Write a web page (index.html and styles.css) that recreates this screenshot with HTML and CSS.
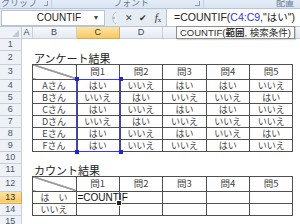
FILE: index.html
```html
<!DOCTYPE html>
<html lang="ja">
<head>
<meta charset="UTF-8">
<meta name="viewport" content="width=device-width, initial-scale=1.0">
<title>COUNTIF</title>
<link rel="stylesheet" href="styles.css">
</head>
<body>
<div class="ribbon">
  <div class="group g1"><span class="label">クリップボード</span><span class="launcher"></span></div>
  <div class="group g2"><span class="label">フォント</span><span class="launcher"></span></div>
  <div class="group g3"><span class="label">配置</span></div>
</div>

<div class="formula-bar">
  <div class="name-box"><span class="name">COUNTIF</span><span class="drop">▾</span></div>
  <div class="grip">
    <svg width="10" height="14" viewBox="0 0 10 14"><path d="M9 1 A7 7 0 0 0 9 13" fill="#eef2f7" stroke="#b7c3d2"/><circle cx="7" cy="7" r="1" fill="#9aa7b8"/></svg>
  </div>
  <div class="fx-buttons">
    <span class="btn cancel">✕</span>
    <span class="btn enter">✔</span>
    <span class="btn fx"><i>f</i><sub>x</sub></span>
  </div>
  <div class="formula">=COUNTIF(<span class="ref">C4:C9</span>,"はい")</div>
</div>

<div class="sheet-wrap">
<table class="sheet">
  <colgroup>
    <col class="c-head"><col class="c-a"><col class="c-b"><col class="c-n"><col class="c-n"><col class="c-n"><col class="c-n"><col class="c-n"><col class="c-rest">
  </colgroup>
  <tr class="r-col">
    <th class="corner"><span class="tri"></span></th><th>A</th><th>B</th><th class="sel">C</th><th>D</th><th>E</th><th>F</th><th>G</th><th></th>
  </tr>
  <tr class="h12"><th>1</th><td></td><td></td><td></td><td></td><td></td><td></td><td></td><td></td></tr>
  <tr class="h14"><th>2</th><td></td><td colspan="3" class="title">アンケート結果</td><td></td><td></td><td></td><td></td></tr>
  <tr class="h15"><th>3</th><td></td><td class="t diag"></td><td class="t q">問1</td><td class="t q">問2</td><td class="t q">問3</td><td class="t q">問4</td><td class="t q">問5</td><td></td></tr>
  <tr class="h12"><th>4</th><td></td><td class="t">Aさん</td><td class="t">はい</td><td class="t">いいえ</td><td class="t">はい</td><td class="t">はい</td><td class="t">いいえ</td><td></td></tr>
  <tr class="h12"><th>5</th><td></td><td class="t">Bさん</td><td class="t">いいえ</td><td class="t">はい</td><td class="t">いいえ</td><td class="t">いいえ</td><td class="t">はい</td><td></td></tr>
  <tr class="h12"><th>6</th><td></td><td class="t">Cさん</td><td class="t">はい</td><td class="t">いいえ</td><td class="t">はい</td><td class="t">はい</td><td class="t">いいえ</td><td></td></tr>
  <tr class="h12"><th>7</th><td></td><td class="t">Dさん</td><td class="t">いいえ</td><td class="t">はい</td><td class="t">いいえ</td><td class="t">いいえ</td><td class="t">いいえ</td><td></td></tr>
  <tr class="h12"><th>8</th><td></td><td class="t">Eさん</td><td class="t">はい</td><td class="t">いいえ</td><td class="t">はい</td><td class="t">いいえ</td><td class="t">はい</td><td></td></tr>
  <tr class="h12"><th>9</th><td></td><td class="t">Fさん</td><td class="t">はい</td><td class="t">いいえ</td><td class="t">いいえ</td><td class="t">はい</td><td class="t">いいえ</td><td></td></tr>
  <tr class="h12"><th>10</th><td></td><td></td><td></td><td></td><td></td><td></td><td></td><td></td></tr>
  <tr class="h13"><th>11</th><td></td><td colspan="3" class="title">カウント結果</td><td></td><td></td><td></td><td></td></tr>
  <tr class="h15"><th>12</th><td></td><td class="t diag"></td><td class="t q">問1</td><td class="t q">問2</td><td class="t q">問3</td><td class="t q">問4</td><td class="t q">問5</td><td></td></tr>
  <tr class="h12"><th class="sel">13</th><td></td><td class="t">は　い</td><td class="t active"><span class="edit">=COUNTIF</span><span class="handle"></span></td><td class="t"></td><td class="t"></td><td class="t"></td><td class="t"></td><td></td></tr>
  <tr class="h12"><th>14</th><td></td><td class="t">いいえ</td><td class="t"></td><td class="t"></td><td class="t"></td><td class="t"></td><td class="t"></td><td></td></tr>
  <tr class="h12"><th>15</th><td></td><td></td><td></td><td></td><td></td><td></td><td></td><td></td></tr>
</table>

<div class="range">
  <span class="dot tl"></span><span class="dot tr"></span><span class="dot bl"></span><span class="dot br"></span>
</div>
<div class="tip">COUNTIF(<b>範囲</b>, 検索条件)</div>
</div>
</body>
</html>
```

FILE: styles.css
```css
body {
  margin: 0;
  width: 300px;
  height: 224px;
  overflow: hidden;
  background-color: #fff;
  font-family: "Liberation Sans", "Noto Sans CJK JP", sans-serif;
  color: #222;
}
.ribbon {
  display: flex;
  height: 8px;
  overflow: hidden;
  background: linear-gradient(#e4ecf7, #d9e4f2);
  border-bottom: 1px solid #b6c6da;
}
.group {
  display: flex;
  align-items: flex-start;
  border-right: 1px solid #c3d1e3;
}
.group .label {
  font-size: 9px;
  line-height: 10px;
  margin-top: -2px;
  color: #6a7a90;
  font-family: "Noto Sans CJK JP", sans-serif;
}
.g1 { width: 51px; }
.g1 .label { margin-left: 1px; }
.g2 { width: 151px; }
.g2 .label { margin-left: 61px; }
.g3 { flex: 1; justify-content: flex-end; border-right: none; }
.g3 .label { margin-right: 6px; }
.launcher {
  width: 4px;
  height: 4px;
  margin: 1px 3px 0 auto;
  border-right: 1px solid #8a9ab0;
  border-bottom: 1px solid #8a9ab0;
}
.formula-bar {
  display: flex;
  align-items: center;
  height: 17px;
  background: #e6ecf4;
  border-bottom: 1px solid #b9c5d4;
}
.name-box {
  width: 102px;
  height: 14px;
  margin-left: 1px;
  background: #fff;
  border: 1px solid #b8c4d3;
  display: flex;
  align-items: center;
  font-size: 10px;
}
.name {
  flex: 1;
  text-align: center;
  padding-left: 22px;
}
.drop {
  width: 10px;
  font-size: 8px;
  color: #444;
}
.grip {
  width: 12px;
  height: 14px;
  margin-left: 2px;
}
.fx-buttons {
  display: flex;
  align-items: center;
  width: 47px;
}
.btn {
  width: 14px;
  text-align: center;
  font-size: 9px;
  color: #333;
}
.cancel { margin-left: 3px; color: #444; }
.fx {
  font-family: "Liberation Serif", serif;
  font-size: 11px;
  margin-left: 1px;
}
.fx sub { font-size: 7px; vertical-align: -1px; }
.formula {
  flex: 1;
  height: 17px;
  line-height: 17px;
  background: #fff;
  border-left: 1px solid #b8c4d3;
  padding-left: 7px;
  font-size: 10.5px;
  white-space: nowrap;
}
.ref { color: #3030f0; }
.sheet-wrap {
  position: relative;
}
.sheet {
  border-collapse: collapse;
  table-layout: fixed;
  width: 307px;
  font-size: 9px;
  font-family: "Noto Sans CJK JP", sans-serif;
}
.c-head { width: 21px; }
.c-a { width: 11px; }
.c-b { width: 44px; }
.c-n { width: 43.4px; }
.c-rest { width: 14px; }
.r-col { height: 11px; }
.h12 { height: 12px; }
.h13 { height: 13px; }
.h14 { height: 14px; }
.h15 { height: 15px; }
.sheet th {
  padding: 0;
  font-weight: normal;
  font-size: 9px;
  line-height: 9px;
  font-family: "Liberation Sans", sans-serif;
  color: #3b4a5e;
  background: linear-gradient(#f6f8fb, #e4e9f0);
  border: 1px solid #c6cfdb;
}
.r-col th {
  border-top: none;
}
.sheet tr > th:first-child {
  border-left: none;
  background: #eef1f6;
  color: #4a5568;
}
.sheet th.sel,
.sheet tr > th.sel:first-child {
  background: linear-gradient(#fbe4a8, #f6c965);
  border-color: #e2a844;
  color: #3d3320;
}
.corner {
  position: relative;
}
.tri {
  position: absolute;
  right: 2px;
  bottom: 1px;
  border-left: 7px solid transparent;
  border-bottom: 7px solid #c1c8d2;
}
.sheet td {
  padding: 0;
  text-align: center;
  white-space: nowrap;
  color: #444;
  line-height: 9px;
}
.sheet td.title {
  text-align: left;
  font-size: 11px;
  line-height: 11px;
  padding-left: 2px;
  vertical-align: bottom;
  color: #222;
}
.sheet td.t {
  border: 1px solid #505050;
}
.sheet td.q {
  font-size: 9.5px;
}
.diag {
  background: linear-gradient(to top right, transparent calc(50% - 0.6px), #4a4a4a calc(50% - 0.4px), #4a4a4a calc(50% + 0.4px), transparent calc(50% + 0.6px));
}
.sheet td.active {
  position: relative;
  text-align: left;
}
.edit {
  position: absolute;
  left: 1px;
  top: 0;
  font-family: "Liberation Sans", sans-serif;
  font-size: 10px;
  line-height: 11px;
  color: #111;
}
.handle {
  position: absolute;
  right: -3px;
  bottom: -3px;
  width: 4px;
  height: 4px;
  background: #222;
  border: 1px solid #fff;
}
.range {
  position: absolute;
  box-sizing: border-box;
  left: 77px;
  top: 52px;
  width: 44px;
  height: 73px;
  border: 1px solid #3838f0;
}
.dot {
  position: absolute;
  width: 4px;
  height: 4px;
  background: #2020e0;
}
.tl { left: -3px; top: -3px; }
.tr { right: -3px; top: -3px; }
.bl { left: -3px; bottom: -3px; }
.br { right: -3px; bottom: -3px; }
.tip {
  position: absolute;
  left: 176px;
  top: -1px;
  height: 11px;
  line-height: 11px;
  padding: 0 3px;
  background: #fbfbfb;
  border: 1px solid #8f8f8f;
  font-size: 9.5px;
  color: #333;
  box-shadow: 1px 1px 1px rgba(0,0,0,0.15);
  white-space: nowrap;
}
```
